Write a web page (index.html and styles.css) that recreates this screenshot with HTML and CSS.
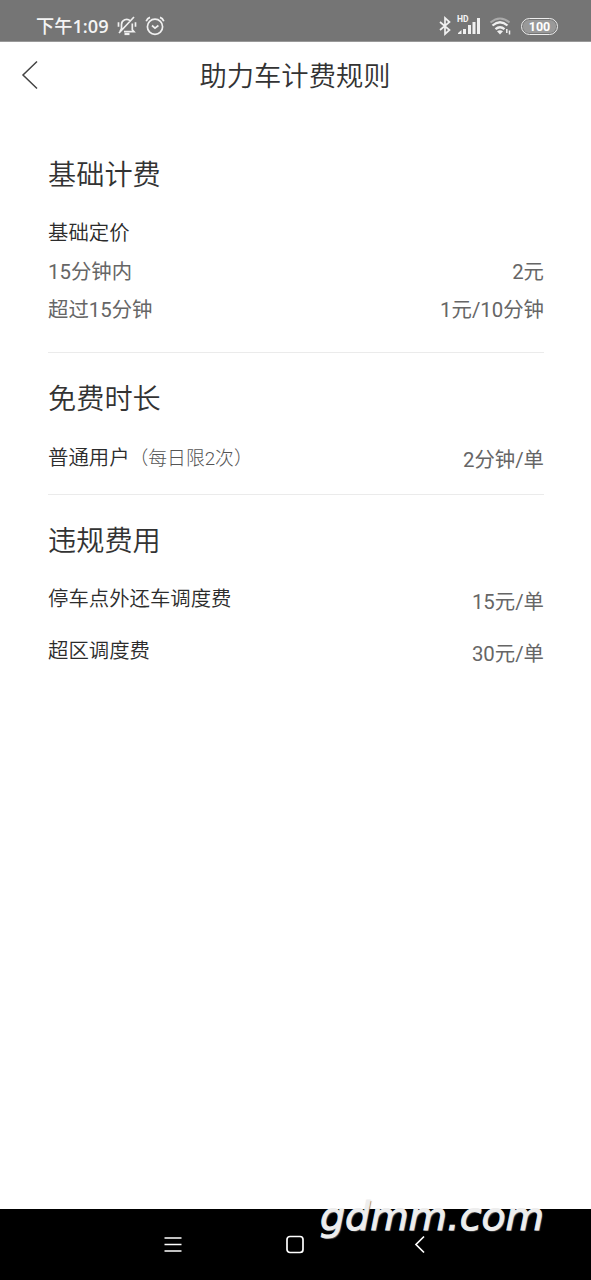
FILE: index.html
```html
<!DOCTYPE html>
<html lang="zh-CN">
<head>
<meta charset="utf-8">
<title>助力车计费规则</title>
<link rel="stylesheet" href="styles.css">
</head>
<body>
<div class="screen">
  <div class="status">
    <span class="clock">下午1:09</span>
    <svg class="i-bell" width="20" height="20" viewBox="0 0 20 20"><path d="M4.500 13.500V8.500a5.200 5.200 0 0 1 8.800-3.600M15.300 7.500v6.200l1.700 2H7M17 1L2 17M1.500 6.200v4.500M18.500 6.200v4.500M4.500 12.500L3 15.700"/><path d="M7.500 18h5" stroke-width="2.200"/></svg>
    <svg class="i-alarm" width="20" height="20" viewBox="0 0 20 20"><circle cx="10" cy="10.700" r="7.600"/><path d="M7 9.500l3 2.700 3.400-2.700M1.200 5.200Q2.300 2.300 5 1.400M18.800 5.200Q17.700 2.300 15 1.400"/></svg>
    <span class="fill"></span>
    <svg class="i-bt" width="14" height="20" viewBox="0 0 14 20"><path d="M2 6l9.500 8-4.500 4V2l4.500 4L2 14"/></svg>
    <div class="signal">
      <span class="hd">HD</span>
      <svg width="24" height="20" viewBox="0 0 24 20"><path class="solid" d="M1 17l3.500-3V18H1zM6 13h3V18H6zM11 9h3V18h-3zM15.500 6h3v12h-3zM20 2h3v16h-3z"/></svg>
    </div>
    <svg class="i-wifi" width="23" height="20" viewBox="0 0 23 20"><path class="dim" d="M1.500 6.500Q11 -1.500 20.500 6.500"/><path d="M3.500 9.500Q11 3 18.500 9.500M6.500 13.200q4.500-3.800 9 0" stroke-width="2.300"/><path class="solid" d="M8 15.200q3-2 6 0L11 18.500z"/><path d="M17.800 13v4M20.500 14.500v4" stroke-width="1.500"/></svg>
    <div class="battery"><span>100</span></div>
  </div>
  <header class="bar">
    <svg width="18" height="30" viewBox="0 0 18 30"><path d="M16 1.500L2 15l14 13.500"/></svg>
    <h1>助力车计费规则</h1>
  </header>
  <main class="rules">
    <section class="group base">
      <h2>基础计费</h2>
      <div class="row lead"><span class="name">基础定价</span></div>
      <div class="row detail"><span>15分钟内</span><span>2元</span></div>
      <div class="row detail"><span>超过15分钟</span><span>1元/10分钟</span></div>
    </section>
    <section class="group free">
      <h2>免费时长</h2>
      <div class="row"><span class="name">普通用户<small>（每日限2次）</small></span><span class="price">2分钟/单</span></div>
    </section>
    <section class="group fines">
      <h2>违规费用</h2>
      <div class="row"><span class="name">停车点外还车调度费</span><span class="price">15元/单</span></div>
      <div class="row"><span class="name">超区调度费</span><span class="price">30元/单</span></div>
    </section>
  </main>
  <footer class="nav">
    <svg width="20" height="20" viewBox="0 0 20 20"><path d="M1.500 3h17M1.500 9.500h17M1.500 16h17"/></svg>
    <svg width="20" height="20" viewBox="0 0 20 20"><rect x="2" y="1.500" width="16" height="16" rx="3"/></svg>
    <svg width="20" height="20" viewBox="0 0 20 20"><path d="M14 1.500L6 9.500l8 8"/></svg>
  </footer>
  <div class="watermark">gdmm.com</div>
</div>
</body>
</html>
```
FILE: styles.css
```css
* { box-sizing: border-box; }
body { margin: 0; background: #fff; font-family: Roboto, "Noto Sans CJK SC", sans-serif; }
svg { display: block; flex: none; fill: none; stroke: #f0f0f0; stroke-width: 1.7; }
h1, h2 { margin: 0; font-weight: 350; color: #333; }
.screen { position: relative; display: flex; flex-direction: column; height: 1280px; overflow: hidden; }

.status { display: flex; align-items: center; height: 42px; padding: 11px 33px 0 36px; background: #757575; border-bottom: 1px solid #999; color: #f4f4f4; }
.clock { width: 81px; font: 600 18.200px/30px "Open Sans", "Noto Sans CJK SC", sans-serif; font-weight: 550; white-space: nowrap; }
.i-alarm { margin-left: 8px; }
.fill { flex: 1; }
.solid { fill: #f0f0f0; stroke: none; }
.dim { stroke: #aaa; stroke-width: 2; }
.signal { position: relative; margin: 0 8px 0 5px; }
.hd { position: absolute; left: 0; top: -1px; font: 700 8.500px/9px Roboto, sans-serif; }
.battery { display: flex; align-items: center; width: 37px; height: 17px; margin-left: 9px; padding: 1px; border: 1.500px solid #eee; border-radius: 9px; }
.battery span { flex: 1; border-radius: 6px; background: #999; color: #fff; font: 700 12.500px/13px Roboto, sans-serif; text-align: center; }

.bar { display: grid; grid-template-columns: 40px 1fr 40px; align-items: center; height: 66px; padding: 0 21px; }
.bar svg { stroke: #444; stroke-width: 1.500; }
.bar h1 { padding-top: 4px; font-size: 27.300px; line-height: 40px; text-align: center; text-indent: -1px; }

.rules { flex: 1; padding: 48px 47px 0 48px; }
.group { border-bottom: 1px solid #ebebeb; }
.group h2 { font-size: 28.200px; line-height: 40px; }
.row { display: flex; justify-content: space-between; height: 38px; font-size: 20.400px; line-height: 38px; color: #666; }
.name { font-weight: 350; color: #2c2c2c; }
.name small { font-size: 18.800px; font-weight: 300; color: #555; }
.price { padding-top: 2px; }
.base { height: 197px; }
.base .lead { margin-top: 18px; }
.base .lead + .row { margin-top: 1px; }
.free { height: 142px; padding-top: 27px; }
.free .row { margin-top: 19px; }
.fines { padding-top: 27px; border: 0; }
.fines .row { margin-top: 18px; }
.fines .row + .row { margin-top: 14px; }
.fines .price { padding-top: 3px; }

.nav { display: flex; justify-content: space-between; align-items: center; height: 71px; padding: 0 161px 0 163px; background: #000; }
.nav svg { stroke: #fff; stroke-width: 1.700; }
.nav svg:nth-child(2) { margin-left: -3px; }
.watermark { position: absolute; left: 320px; top: 1188px; font: italic 400 39.500px/56px "DejaVu Sans", sans-serif; color: #eee; -webkit-text-stroke: 1px #eee; text-shadow: 1px 1px 1px #666; white-space: nowrap; }
```
